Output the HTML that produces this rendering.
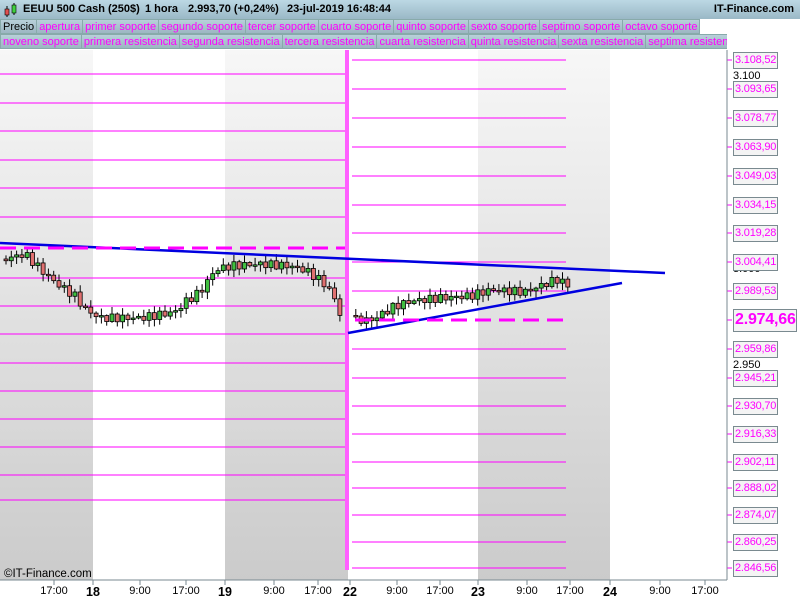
<!DOCTYPE html>
<html><head><meta charset="utf-8"><style>
*{margin:0;padding:0;box-sizing:border-box}
body{width:800px;height:600px;overflow:hidden;background:#fff;font-family:"Liberation Sans",sans-serif;position:relative}
#hdr{position:absolute;left:0;top:0;width:800px;height:19px;background:linear-gradient(#bcd8e4,#9ab8c6);font-size:11px;font-weight:bold;color:#000}
#hdr span{position:absolute;top:3px}
.row{position:absolute;left:0;height:16px;white-space:nowrap;font-size:11px}
.row div{display:inline-block;height:15px;line-height:14px;padding:0 2px;border:1px solid #8aa;background:linear-gradient(#b8d0da,#9cb6c2);color:#f0f;margin-right:-1px;vertical-align:top}
.lbl{position:absolute;left:733px;width:45px;height:17px;border:1px solid #7a8a90;background:#f4f4f4;color:#f0f;font-size:11px;line-height:15px;padding-left:1px;letter-spacing:-0.2px;white-space:nowrap}
.ax{position:absolute;font-size:11px;color:#000}
.bt{position:absolute;top:585px;font-size:11px;transform:translateX(-50%)}
</style></head><body>
<div id="hdr">
<svg style="position:absolute;left:3px;top:2px" width="16" height="16"><line x1="4" y1="4" x2="4" y2="15" stroke="#000"/><rect x="2" y="7" width="4" height="6" fill="#e05050" stroke="#000" stroke-width=".6"/><line x1="11" y1="1" x2="11" y2="13" stroke="#000"/><rect x="9" y="3" width="4" height="8" fill="#40d040" stroke="#000" stroke-width=".6"/></svg>
<span style="left:23px">EEUU 500 Cash (250$)</span><span style="left:145px">1 hora</span><span style="left:188px">2.993,70 (+0,24%)</span><span style="left:287px">23-jul-2019 16:48:44</span><span style="right:6px">IT-Finance.com</span></div>
<div class="row" style="top:19px"><div style="color:#000">Precio</div><div>apertura</div><div>primer soporte</div><div>segundo soporte</div><div>tercer soporte</div><div>cuarto soporte</div><div>quinto soporte</div><div>sexto soporte</div><div>septimo soporte</div><div>octavo soporte</div></div>
<div class="row" style="top:34px;width:727px;overflow:hidden"><div>noveno soporte</div><div>primera resistencia</div><div>segunda resistencia</div><div>tercera resistencia</div><div>cuarta resistencia</div><div>quinta resistencia</div><div>sexta resistencia</div><div>septima resistencia</div></div>
<svg id="ch" style="position:absolute;left:0;top:50px" width="800" height="550">
<defs><linearGradient id="g" x1="0" y1="0" x2="0" y2="1"><stop offset="0" stop-color="#f7f7f7"/><stop offset="1" stop-color="#cbcbcb"/></linearGradient></defs>
<rect x="0" y="0" width="93" height="530" fill="url(#g)"/>
<rect x="225" y="0" width="123" height="530" fill="url(#g)"/>
<rect x="478" y="0" width="132" height="530" fill="url(#g)"/>
<g id="lv" stroke="#f0f" stroke-width="1"></g>
<g id="cd"></g>
<line x1="0" y1="193" x2="665" y2="223" stroke="#0000e0" stroke-width="2.5"/>
<line x1="348" y1="283" x2="622" y2="233" stroke="#0000e0" stroke-width="2.5"/>
<line x1="0" y1="198" x2="345" y2="198" stroke="#f0f" stroke-width="3" stroke-dasharray="16,8"/>
<line x1="355" y1="270" x2="566" y2="270" stroke="#f0f" stroke-width="3" stroke-dasharray="16,8"/>
<line x1="0" y1="530" x2="727" y2="530" stroke="#7a8a90"/>
<line x1="727" y1="0" x2="727" y2="530" stroke="#7a8a90"/>
<g id="tk" stroke="#7a8a90"></g>
<text x="4" y="527" font-size="11.5" font-family="Liberation Sans">©IT-Finance.com</text>
</svg>
<div class="ax" style="left:733px;top:70px">3.100</div>
<div class="ax" style="left:733px;top:263px">3.000</div>
<div class="ax" style="left:733px;top:359px">2.950</div>
<div id="lb"></div>
<div id="bt"></div>
<script>
(function(){
var ns="http://www.w3.org/2000/svg";
function el(p,t,a){var e=document.createElementNS(ns,t);for(var k in a)e.setAttribute(k,a[k]);p.appendChild(e);return e}
var lv=document.getElementById('lv');
var L=[74,103,131,160,188,217,278,306,334,363,391,419,447,475,500];
L.forEach(function(y){el(lv,'line',{x1:0,y1:y-50,x2:345,y2:y-50})});
var R=[[60,'3.108,52'],[89,'3.093,65'],[118,'3.078,77'],[147,'3.063,90'],[176,'3.049,03'],[205,'3.034,15'],[233,'3.019,28'],[262,'3.004,41'],[291,'2.989,53'],[320,'2.974,66'],[349,'2.959,86'],[378,'2.945,21'],[406,'2.930,70'],[434,'2.916,33'],[462,'2.902,11'],[488,'2.888,02'],[515,'2.874,07'],[542,'2.860,25'],[568,'2.846,56']];
var lb=document.getElementById('lb'),h='';
R.forEach(function(r,i){if(i!=9)el(lv,'line',{x1:352,y1:r[0]-50,x2:566,y2:r[0]-50});el(lv,'line',{x1:727,y1:r[0]-50,x2:732,y2:r[0]-50});
if(i==9)h+='<div class="lbl" style="top:'+(r[0]-11)+'px;width:64px;height:23px;font-size:16px;font-weight:bold;line-height:20px">'+r[1]+'</div>';
else h+='<div class="lbl" style="top:'+(r[0]-8)+'px">'+r[1]+'</div>';});
lb.innerHTML=h;
el(lv,'rect',{x:345,y:0,width:4,height:520,fill:'#ff60ff',stroke:'none'});
var W=[[5,259],[25,254],[35,264],[50,278],[60,286],[75,296],[85,309],[100,318],[140,318],[175,312],[185,302],[200,292],[207,282],[215,270],[230,266],[260,264],[290,266],[305,270],[320,280],[332,292],[343,322],[352,320],[372,320],[395,306],[412,301],[440,298],[470,296],[490,290],[510,291],[525,292],[545,284],[558,279],[566,285]];
function yAt(x){for(var i=1;i<W.length;i++)if(x<=W[i][0]){var a=W[i-1],b=W[i];return a[1]+(b[1]-a[1])*(x-a[0])/(b[0]-a[0]);}return W[W.length-1][1]}
var cd=document.getElementById('cd'),prev=259;
for(var x=4;x<=567;x+=5.3){if(x>342&&x<352)continue;var c=yAt(x+2)+Math.sin(x*1.7)*4;var o=prev;prev=c;
var tp=Math.min(o,c),bt=Math.max(o,c);if(bt-tp<1.5)bt=tp+1.5;var hi=tp-1-Math.abs(Math.sin(x*0.9))*6,lo=bt+1+Math.abs(Math.cos(x*1.3))*6;
el(cd,'line',{x1:x+2,y1:hi-50,x2:x+2,y2:lo-50,stroke:'#000','stroke-width':1});
el(cd,'rect',{x:x,y:tp-50,width:4,height:bt-tp,fill:c<o?'#40c040':'#e07070',stroke:'#000','stroke-width':0.8});}
var T=[[54,'17:00'],[93,'18',1],[140,'9:00'],[186,'17:00'],[225,'19',1],[274,'9:00'],[318,'17:00'],[350,'22',1],[397,'9:00'],[440,'17:00'],[478,'23',1],[527,'9:00'],[570,'17:00'],[610,'24',1],[660,'9:00'],[705,'17:00']];
var tk=document.getElementById('tk'),bh='';
T.forEach(function(t){el(tk,'line',{x1:t[0],y1:530,x2:t[0],y2:535});bh+='<div class="bt" style="left:'+t[0]+'px;'+(t[2]?'font-weight:bold;font-size:12.5px':'')+'">'+t[1]+'</div>'});
document.getElementById('bt').innerHTML=bh;
})();
</script>
</body></html>
